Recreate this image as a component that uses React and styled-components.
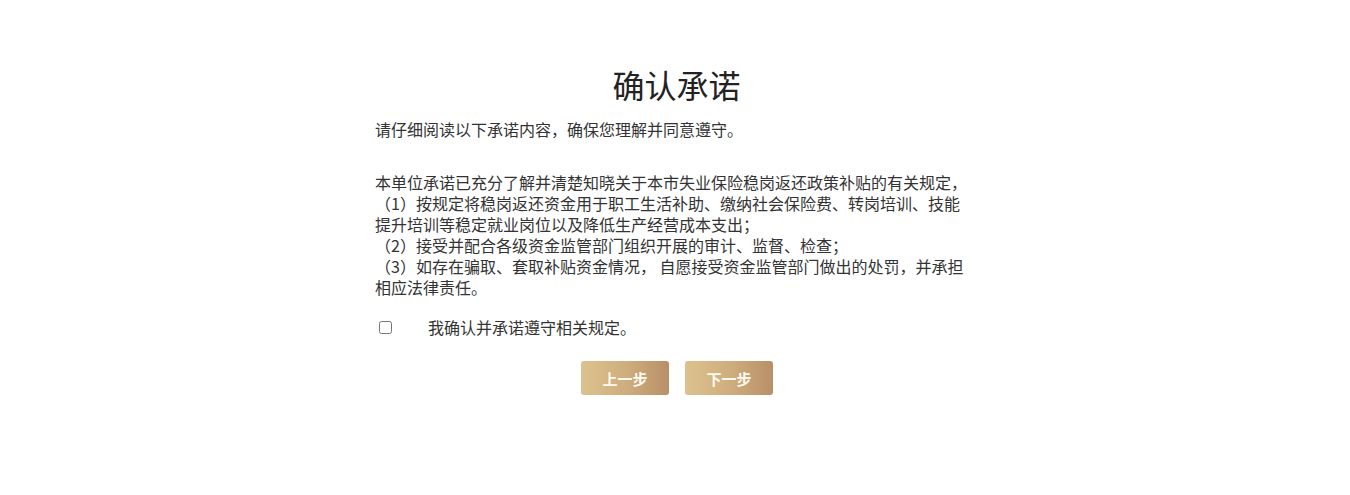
import React from "react";
import styled, { createGlobalStyle } from "styled-components";

const Global = createGlobalStyle`
  html, body { margin: 0; padding: 0; background: #fff; }
  body {
    font-family: "Noto Sans CJK SC", "Noto Sans", sans-serif;
    color: #333;
    text-spacing-trim: space-all;
  }
`;

const Page = styled.div`
  display: flex;
  justify-content: center;
  padding-top: 60px;
`;

const Column = styled.div`
  width: 600px;
  display: flex;
  flex-direction: column;
`;

const Title = styled.h1`
  margin: 0;
  text-align: center;
  font-size: 32px;
  font-weight: 400;
  line-height: 48px;
  color: #222;
  padding-left: 3px;
`;

const Intro = styled.p`
  margin: 11px 0 0;
  font-size: 16px;
  line-height: 21px;
  color: #333;
`;

const Body = styled.div`
  margin-top: 32px;
  width: 600px;
  font-size: 16px;
  line-height: 21px;
  color: #333;
`;

const Para = styled.p`
  margin: 0;
`;

const CheckRow = styled.label`
  display: flex;
  align-items: center;
  margin-top: 19px;
  font-size: 16px;
  line-height: 21px;
  color: #333;
  cursor: pointer;
`;

const Box = styled.input`
  margin: 3px 3px 3px 4px;
  width: 13px;
  height: 13px;
`;

const CheckText = styled.span`
  margin-left: 33px;
`;

const Actions = styled.div`
  display: flex;
  justify-content: center;
  gap: 16px;
  margin-top: 23px;
  padding-left: 4px;
`;

const StepButton = styled.button`
  width: 88px;
  height: 34px;
  border: none;
  border-radius: 3px;
  background: linear-gradient(90deg, #dcc28f 0%, #cfae7e 50%, #b88f68 100%);
  color: #fffaf2;
  font-family: inherit;
  font-size: 15px;
  font-weight: 700;
  cursor: pointer;
`;

export default function App() {
  return (
    <>
      <Global />
      <Page>
        <Column>
          <Title>确认承诺</Title>
          <Intro>请仔细阅读以下承诺内容，确保您理解并同意遵守。</Intro>
          <Body>
            <Para>本单位承诺已充分了解并清楚知晓关于本市失业保险稳岗返还政策补贴的有关规定，</Para>
            <Para>（1）按规定将稳岗返还资金用于职工生活补助、缴纳社会保险费、转岗培训、技能提升培训等稳定就业岗位以及降低生产经营成本支出；</Para>
            <Para>（2）接受并配合各级资金监管部门组织开展的审计、监督、检查；</Para>
            <Para>（3）如存在骗取、套取补贴资金情况， 自愿接受资金监管部门做出的处罚，并承担相应法律责任。</Para>
          </Body>
          <CheckRow>
            <Box type="checkbox" />
            <CheckText>我确认并承诺遵守相关规定。</CheckText>
          </CheckRow>
          <Actions>
            <StepButton>上一步</StepButton>
            <StepButton>下一步</StepButton>
          </Actions>
        </Column>
      </Page>
    </>
  );
}
